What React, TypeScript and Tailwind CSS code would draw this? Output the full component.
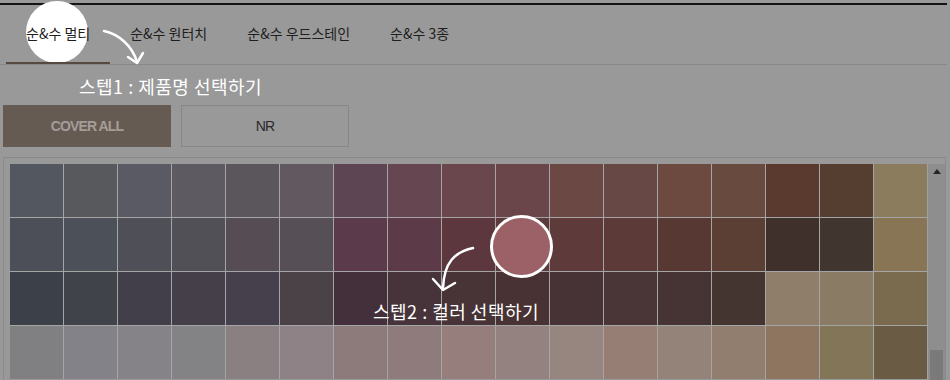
const TABS = ["순&수 멀티", "순&수 원터치", "순&수 우드스테인", "순&수 3종"];

// colours as they appear under the tutorial dim
const ROWS: string[][] = [
  ["#525760", "#58595d", "#595a63", "#5e5a61", "#5b555c", "#625960", "#5e4554", "#664650", "#6a474d", "#6a4549", "#6b4844", "#684845", "#6c4a40", "#684a3e", "#5a3a2e", "#553e2f", "#8c7c5e"],
  ["#4c4f58", "#4c5058", "#4f4f58", "#525057", "#554c54", "#574f56", "#5a3a4b", "#5c3a48", "#5c373e", "#5c3a3c", "#5e3a3a", "#5b3a38", "#573833", "#5b3e34", "#3f302b", "#40352f", "#887555"],
  ["#3c4048", "#41434b", "#433f4a", "#453f4a", "#463f4c", "#4a4246", "#43303a", "#47333a", "#483436", "#483234", "#473335", "#4a3637", "#463333", "#443531", "#8e7e6a", "#897b64", "#7a6a4e"],
  ["#808083", "#838288", "#858388", "#838284", "#8a7f81", "#8e8286", "#8c7b7a", "#8f7b7b", "#967e7c", "#938280", "#978580", "#967e74", "#948378", "#927e6e", "#8d7560", "#837558", "#6a5b45"],
];

export default function App() {
  return (
    <div className="relative w-[950px] h-[380px] overflow-hidden bg-[#999999] font-['Noto_Sans_CJK_KR','Noto_Sans',sans-serif]">
      <div className="mt-[3px] h-[2px] mr-[3px] bg-[#141414]" />

      {/* spotlight behind first tab */}
      <div className="absolute left-[26px] top-[1px] w-[62px] h-[62px] rounded-full bg-white" />

      <div className="relative flex pl-[6px] border-b border-[#888888] mr-[3px]">
        {TABS.map((t, i) => (
          <div
            key={t}
            className={`h-[59px] px-5 flex items-center text-[14px] text-[#1e1e1e] ${i === 0 ? "border-b-2 border-[#56493f]" : "border-b-2 border-transparent"}`}
          >
            {t}
          </div>
        ))}
      </div>

      <div className="flex gap-[10px] pl-[3px] mt-[40px]">
        <button className="w-[168px] h-[42px] bg-[#665b53] text-[#a49d98] text-[14px] font-semibold tracking-[-0.9px] font-['Liberation_Sans',sans-serif]">
          COVER ALL
        </button>
        <button className="w-[168px] h-[42px] border border-[#878787] text-[#2a2a2a] text-[14px] tracking-[-0.8px] font-['Liberation_Sans',sans-serif]">
          NR
        </button>
      </div>

      <div className="mt-[10px] ml-[3px] w-[943px] h-[240px] border border-[#8a8a8a] pt-[6px] pl-[6px] flex">
        <div className="grid grid-cols-[repeat(17,53px)] gap-px bg-[#a5a5a5] self-start">
          {ROWS.flat().map((c, i) => (
            <div key={i} className="h-[53px]" style={{ backgroundColor: c }} />
          ))}
        </div>
        <div className="relative w-[18px] bg-[#8e8e8e] border-l border-[#a0a0a0]">
          <div className="flex justify-center pt-[5px]">
            <div className="w-0 h-0 border-l-[4px] border-r-[4px] border-b-[5px] border-l-transparent border-r-transparent border-b-[#262626]" />
          </div>
          <div className="absolute left-[2px] top-[186px] w-[13px] h-[60px] bg-[#7a7a7a]" />
        </div>
      </div>

      {/* tutorial overlay */}
      <div className="absolute left-[490px] top-[215px] w-[63px] h-[63px] rounded-full border-[3px] border-white bg-[#9c6167]" />

      <div className="absolute left-[79px] top-[72px] text-[18px] leading-[28px] tracking-[0.5px] text-white">스텝1 : 제품명 선택하기</div>
      <div className="absolute left-[373px] top-[297px] text-[18px] leading-[28px] tracking-[0.5px] text-white">스텝2 : 컬러 선택하기</div>

      <svg className="absolute left-0 top-0 pointer-events-none" width="950" height="380" fill="none" stroke="white" strokeWidth="2.5" strokeLinecap="round" strokeLinejoin="round">
        <path d="M104 31 C118 34 132 45 137 62" />
        <path d="M128 57 L137 63 L143 53" />
        <path d="M473 248 C455 252 444 262 443 288" />
        <path d="M433 279 L443 290 L455 283" />
      </svg>
    </div>
  );
}
